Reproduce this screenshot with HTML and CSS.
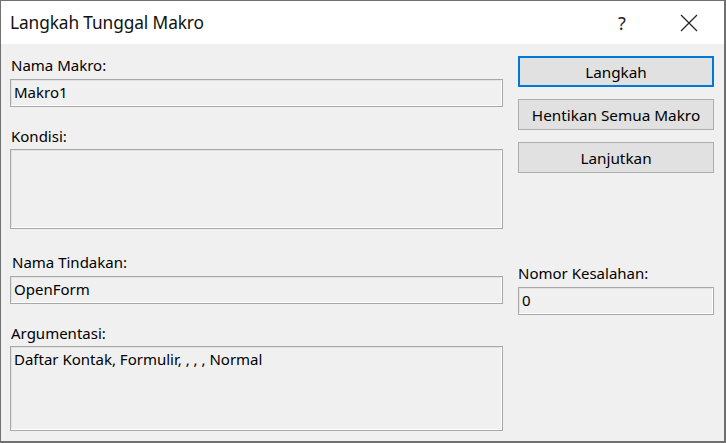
FILE: index.html
```html
<!DOCTYPE html>
<html>
<head>
<meta charset="utf-8">
<link rel="stylesheet" href="styles.css">
</head>
<body>
<div class="window">
  <div class="titlebar">
    <span class="title">Langkah Tunggal Makro</span>
    <span class="help">?</span>
    <span class="close">
      <svg width="18" height="18" viewBox="0 0 18 18"><path d="M1 1 L17 17 M17 1 L1 17" stroke="#222" stroke-width="1.2" fill="none"/></svg>
    </span>
  </div>
  <div class="content">
    <div class="left">
      <div class="label l1">Nama Makro:</div>
      <div class="field f-input">Makro1</div>
      <div class="label l2">Kondisi:</div>
      <div class="field f-cond"></div>
      <div class="label l3">Nama Tindakan:</div>
      <div class="field f-input">OpenForm</div>
      <div class="label l2">Argumentasi:</div>
      <div class="field f-args">Daftar Kontak, Formulir, , , , Normal</div>
    </div>
    <div class="right">
      <div class="btn default">Langkah</div>
      <div class="btn">Hentikan Semua Makro</div>
      <div class="btn">Lanjutkan</div>
      <div class="spacer"></div>
      <div class="label">Nomor Kesalahan:</div>
      <div class="field f-input">0</div>
    </div>
  </div>
</div>
</body>
</html>
```
FILE: styles.css
```css
html, body {
  margin: 0;
  padding: 0;
  background: #f0f0f0;
}
.window {
  width: 726px;
  height: 443px;
  box-sizing: border-box;
  border: 1px solid #707070;
  border-bottom-width: 2px;
  border-right-width: 2px;
  background: #f0f0f0;
  font-family: "Noto Sans", "Open Sans", sans-serif;
  color: #000;
  display: flex;
  flex-direction: column;
}
.titlebar {
  height: 43px;
  background: #fff;
  display: flex;
  align-items: center;
  flex-shrink: 0;
}
.title {
  font-size: 17.3px;
  margin-left: 9px;
  flex: 1;
  letter-spacing: -0.1px;
  color: #111;
}
.help {
  font-size: 18px;
  width: 20px;
  margin-right: 42px;
  color: #222;
}
.close {
  width: 18px;
  height: 18px;
  margin-right: 26px;
  display: flex;
}
.content {
  display: flex;
  padding: 0 9px;
  gap: 15px;
}
.left {
  width: 493px;
  display: flex;
  flex-direction: column;
  padding-top: 11px;
}
.right {
  width: 196px;
  display: flex;
  flex-direction: column;
  padding-top: 12px;
}
.label {
  font-size: 15px;
  height: 20px;
  line-height: 20px;
  padding-left: 1px;
}
.l2 { margin-top: 19px; }
.l3 { margin-top: 23px; padding-left: 2px; }
.field {
  box-sizing: border-box;
  border: 1px solid #a8a8a8;
  box-shadow: inset -1px -1px 0 #ffffff, inset 1px 1px 0 #e3e3e3;
  background: #f0f0f0;
  font-size: 15px;
  padding: 2px 3px;
  line-height: 20px;
}
.left .label + .field { margin-top: 4px; }
.f-input { height: 28px; }
.f-cond { height: 80px; margin-top: 3px !important; }
.f-args { height: 85px; margin-top: 3px !important; }
.btn {
  box-sizing: border-box;
  height: 31px;
  border: 1px solid #adadad;
  background: #e1e1e1;
  font-size: 15.3px;
  display: flex;
  align-items: center;
  justify-content: center;
  margin-bottom: 12px;
}
.btn.default {
  border: 2px solid #0078d7;
}
.spacer { height: 78px; }
.right .label + .field { margin-top: 4px; }
.right .label { padding-left: 0; }
```
